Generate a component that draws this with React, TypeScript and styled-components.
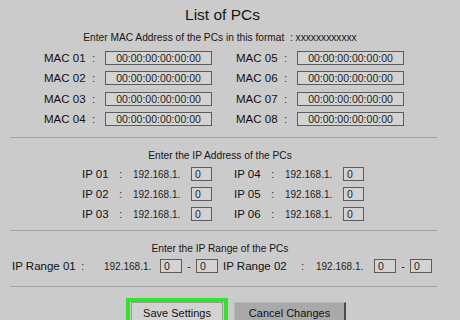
import React from 'react'
import styled, { createGlobalStyle } from 'styled-components'

const GlobalStyle = createGlobalStyle`
  html, body {
    margin: 0;
    padding: 0;
    background: #cbcbcb;
  }
  body {
    font-family: "Liberation Sans", Arial, sans-serif;
    color: #161616;
  }
`

const macs = [
  ['MAC 01', 'MAC 05'],
  ['MAC 02', 'MAC 06'],
  ['MAC 03', 'MAC 07'],
  ['MAC 04', 'MAC 08'],
]

const ips = [
  ['IP 01', 'IP 04'],
  ['IP 02', 'IP 05'],
  ['IP 03', 'IP 06'],
]

const App = () => {
  return (
    <Page>
      <GlobalStyle />
      <Title>List of PCs</Title>
      <Note $top={6}>Enter MAC Address of the PCs in this format &nbsp;: xxxxxxxxxxxx</Note>

      <MacGrid>
        {macs.map((pair) => (
          <React.Fragment key={pair[0]}>
            {pair.map((label) => (
              <Field key={label}>
                <Label $w={48}>{label}</Label>
                <Colon $w={13}>:</Colon>
                <MacBox>00:00:00:00:00:00</MacBox>
              </Field>
            ))}
          </React.Fragment>
        ))}
      </MacGrid>

      <Divider $top={8} />

      <Note $top={11}>Enter the IP Address of the PCs</Note>
      <IpGrid>
        {ips.map((pair) => (
          <React.Fragment key={pair[0]}>
            {pair.map((label) => (
              <Field key={label}>
                <Label $w={37}>{label}</Label>
                <Colon $w={14}>:</Colon>
                <Prefix $w={58}>192.168.1.</Prefix>
                <SmallBox>0</SmallBox>
              </Field>
            ))}
          </React.Fragment>
        ))}
      </IpGrid>

      <Divider $top={6} />

      <Note $top={11}>Enter the IP Range of the PCs</Note>
      <RangeRow>
        <Field>
          <Label $w={69}>IP Range 01</Label>
          <Colon $w={23}>:</Colon>
          <Prefix $w={56}>192.168.1.</Prefix>
          <SmallBox>0</SmallBox>
          <Dash>-</Dash>
          <SmallBox>0</SmallBox>
        </Field>
        <Field>
          <Label $w={78}>IP Range 02</Label>
          <Colon $w={15}>:</Colon>
          <Prefix $w={58}>192.168.1.</Prefix>
          <SmallBox>0</SmallBox>
          <Dash>-</Dash>
          <SmallBox>0</SmallBox>
        </Field>
      </RangeRow>

      <Divider $top={13} />

      <Buttons>
        <Highlight>
          <SaveButton>Save Settings</SaveButton>
        </Highlight>
        <CancelButton>Cancel Changes</CancelButton>
      </Buttons>
    </Page>
  )
}

export default App

const Page = styled.div`
  width: 460px;
  height: 320px;
  overflow: hidden;
  display: flex;
  flex-direction: column;
`

const Title = styled.h1`
  margin: 5px 0 0;
  padding-right: 15px;
  font-size: 15.5px;
  line-height: 20px;
  font-weight: normal;
  text-align: center;
`

const Note = styled.p<{ $top: number }>`
  margin: ${(p) => p.$top}px 0 0;
  padding-right: 20px;
  font-size: 10.2px;
  line-height: 14px;
  text-align: center;
`

const MacGrid = styled.div`
  margin-top: 3px;
  padding-left: 44px;
  display: grid;
  grid-template-columns: 168px 168px;
  column-gap: 24px;
  grid-auto-rows: 20.3px;
`

const IpGrid = styled.div`
  margin-top: 1px;
  padding-left: 82px;
  display: grid;
  grid-template-columns: 130px 130px;
  column-gap: 22px;
  grid-auto-rows: 20px;
`

const RangeRow = styled.div`
  margin-top: 3px;
  padding-left: 12px;
  height: 20px;
  display: flex;
  gap: 5px;
`

const Field = styled.div`
  display: flex;
  align-items: center;
  font-size: 11.5px;
`

const Label = styled.span<{ $w: number }>`
  width: ${(p) => p.$w}px;
  flex: none;
  color: #111;
`

const Colon = styled.span<{ $w: number }>`
  width: ${(p) => p.$w}px;
  flex: none;
  color: #333;
`

const Prefix = styled.span<{ $w: number }>`
  width: ${(p) => p.$w}px;
  flex: none;
  font-size: 10px;
  color: #222;
`

const MacBox = styled.span`
  box-sizing: border-box;
  width: 107px;
  height: 14px;
  border: 1px solid #5c5c5c;
  background: #d3d3d3;
  font-size: 10.5px;
  line-height: 12px;
  text-align: center;
  color: #222;
`

const SmallBox = styled.span`
  box-sizing: border-box;
  width: 22px;
  height: 14px;
  padding-left: 3px;
  border: 1px solid #5c5c5c;
  background: #d3d3d3;
  font-size: 10.5px;
  line-height: 12px;
  color: #222;
`

const Dash = styled.span`
  width: 14px;
  text-align: center;
  font-size: 10.5px;
`

const Divider = styled.hr<{ $top: number }>`
  margin: ${(p) => p.$top}px 0 0 10px;
  width: 427px;
  height: 0;
  border: none;
  border-top: 1px solid #a3a3a3;
`

const Buttons = styled.div`
  margin-top: 11px;
  padding-left: 126px;
  display: flex;
  align-items: flex-start;
  gap: 6px;
`

const Highlight = styled.div`
  border: 4px solid #2fe32f;
  border-bottom: none;
  padding: 0 1px;
  height: 30px;
`

const SaveButton = styled.button`
  box-sizing: border-box;
  width: 92px;
  height: 18px;
  border: 1px solid #9a9a9a;
  border-bottom: none;
  background: #d2d2d2;
  font-family: inherit;
  font-size: 11px;
  line-height: 13px;
  color: #111;
  padding: 3px 0 0;
  text-align: center;
  display: block;
`

const CancelButton = styled.button`
  box-sizing: border-box;
  margin-top: 4px;
  width: 112px;
  height: 18px;
  border: 1px solid #b8b8b8;
  border-bottom: none;
  border-right: 2px solid #4a4a4a;
  background: #a9a9a9;
  font-family: inherit;
  font-size: 11px;
  line-height: 13px;
  color: #111;
  padding: 3px 0 0;
  text-align: center;
`
